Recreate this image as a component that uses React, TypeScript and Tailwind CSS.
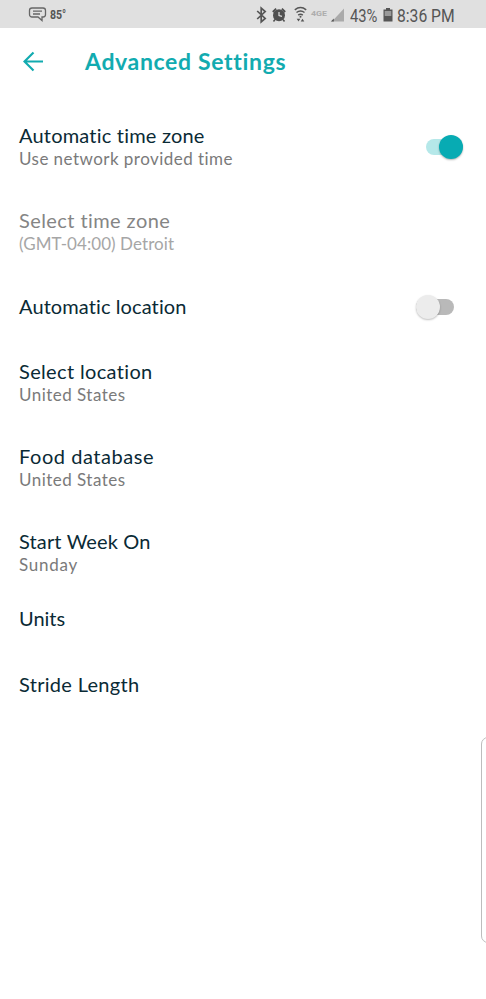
import React from "react";

type SwitchProps = { on: boolean };

function Switch({ on }: SwitchProps) {
  return on ? (
    <div className="flex h-6 w-[37px] items-center justify-end">
      <div className="flex h-4 w-full items-center justify-end rounded-full bg-[#b5e8e9]">
        <div className="size-6 shrink-0 rounded-full bg-[#07abb3] shadow-[0_1px_2px_rgba(0,0,0,0.3)]" />
      </div>
    </div>
  ) : (
    <div className="mr-[9px] flex h-6 w-[38px] items-center">
      <div className="flex h-4 w-full items-center rounded-full bg-[#b9b9b9]">
        <div className="size-6 shrink-0 rounded-full bg-[#ececec] shadow-[0_1px_2px_rgba(0,0,0,0.25)]" />
      </div>
    </div>
  );
}

function StatusBar() {
  return (
    <div className="flex h-7 items-center bg-[#e0e0e0] font-['Roboto',sans-serif] text-[#555]">
      <svg className="ml-7 shrink-0" width="20" height="28" viewBox="0 0 20 28" fill="none" stroke="#666" strokeWidth="1.3">
        <path d="M4 8h11a2.500 2.500 0 0 1 2.500 2.500v4a2.500 2.500 0 0 1-2.500 2.500h-1v3.500L10 17H4a2.500 2.500 0 0 1-2.500-2.500v-4A2.500 2.500 0 0 1 4 8z" />
        <path d="M5 11.200h9M5 14h7" />
      </svg>
      <div className="ml-[2px] w-[18px] shrink-0">
        <span className="block w-max origin-left scale-x-[0.88] pt-px text-[12px] font-bold leading-7">85°</span>
      </div>
      <svg className="ml-[186px] shrink-0" width="92" height="28" viewBox="254 0 92 28" fill="none">
        <path d="M257.200 11l8 7.500-4 3.500V8l4 3.500-8 7.500" stroke="#555" strokeWidth="1.700" />
        <circle cx="279" cy="15.300" r="6" fill="#505050" />
        <path d="M272.800 12l3.300-3.300M285.200 12l-3.300-3.300" stroke="#505050" strokeWidth="1.800" />
        <path d="M275 19.500l-1.500 2M283 19.500l1.500 2" stroke="#505050" strokeWidth="1.500" />
        <path d="M279 12v3.500l3 .8" stroke="#e0e0e0" strokeWidth="1.200" />
        <path
          d="M294.800 9.800q5.700-4.400 11.400 0M296.500 12.500q4-3.200 8 0M298.200 15.200q2.300-1.800 4.600 0"
          stroke="#555"
          strokeWidth="1.500"
        />
        <circle cx="300.500" cy="16.800" r="1" fill="#555" />
        <path d="M296.700 18.800l1.800 2.800 1.800-2.800zM300.700 21.600l1.800-2.800 1.800 2.800z" fill="#555" />
        <text x="311" y="15.500" fontSize="8" fontWeight="700" fill="#adadad" textLength="16" lengthAdjust="spacingAndGlyphs">4GE</text>
        <path d="M344 8.500V21.500H332z" fill="#aaa" />
        <path d="M330.800 21.500l3-3v3z" fill="#555" />
      </svg>
      <div className="ml-[4px] w-[28px] shrink-0">
        <span className="block w-max origin-left scale-x-[0.82] pt-1 text-[18px] leading-7">43%</span>
      </div>
      <svg className="ml-[4px] shrink-0" width="12" height="28" viewBox="382 0 12 28">
        <path d="M386 8h4v1.500h2.500V21.500h-9V9.500h2.500z" fill="#555" />
        <path d="M384.700 11h6.600v5h-6.600z" fill="#999" />
      </svg>
      <span className="ml-[3px] block w-max shrink-0 origin-left scale-x-[0.87] pt-1 text-[18px] leading-7">8:36 PM</span>
    </div>
  );
}

type ItemProps = {
  title: string;
  subtitle?: string;
  className?: string;
  titleClass?: string;
  subtitleClass?: string;
  children?: React.ReactNode;
};

function Item({
  title,
  subtitle,
  className = "",
  titleClass = "text-[#0a2a35]",
  subtitleClass = "text-[#7a7a7a]",
  children,
}: ItemProps) {
  return (
    <div className={`flex items-center justify-between pl-[19px] pr-[23px] ${className}`}>
      <div className="whitespace-nowrap">
        <h2 className={`w-max pb-0.5 text-[20px] leading-[22px] ${titleClass}`}>{title}</h2>
        {subtitle && (
          <p className={`w-max text-[17px] leading-[22px] ${subtitleClass}`}>{subtitle}</p>
        )}
      </div>
      {children}
    </div>
  );
}

export default function App() {
  return (
    <div className="relative h-[999px] w-[486px] overflow-hidden bg-white font-['Lato',sans-serif] [font-variant-ligatures:none]">
      <StatusBar />
      <header className="flex h-[67px] items-center pl-[23px]">
        <svg width="21" height="21" viewBox="0 0 21 21" fill="none" stroke="#12abb0" strokeWidth="2.2">
          <path d="M20 10.500H2M10.500 1.500l-9 9 9 9" />
        </svg>
        <h1 className="ml-[41px] whitespace-nowrap pb-0.5 text-[23px] font-bold leading-8 tracking-[0.66px] text-[#12abb0]">
          Advanced Settings
        </h1>
      </header>
      <main>
        <Item
          className="mt-[29px]"
          title="Automatic time zone"
          subtitle="Use network provided time"
          titleClass="text-[#0a2a35] tracking-[0.2px]"
          subtitleClass="text-[#7a7a7a] tracking-[0.46px]"
        >
          <Switch on />
        </Item>
        <Item
          className="mt-[39px]"
          title="Select time zone"
          subtitle="(GMT-04:00) Detroit"
          titleClass="text-[#858585] tracking-[0.42px]"
          subtitleClass="text-[#a6a6a6] tracking-[0.07px]"
        />
        <Item className="mt-10" title="Automatic location" titleClass="text-[#0a2a35] tracking-[0.1px]">
          <Switch on={false} />
        </Item>
        <Item
          className="mt-[41px]"
          title="Select location"
          subtitle="United States"
          titleClass="text-[#0a2a35] tracking-[0.35px]"
          subtitleClass="text-[#7a7a7a] tracking-[0.47px]"
        />
        <Item
          className="mt-[39px]"
          title="Food database"
          subtitle="United States"
          titleClass="text-[#0a2a35] tracking-[0.55px]"
          subtitleClass="text-[#7a7a7a] tracking-[0.47px]"
        />
        <Item
          className="mt-[39px]"
          title="Start Week On"
          subtitle="Sunday"
          titleClass="text-[#0a2a35] tracking-[0.14px]"
          subtitleClass="text-[#7a7a7a] tracking-[0.75px]"
        />
        <Item className="mt-[31px]" title="Units" />
        <Item className="mt-[42px]" title="Stride Length" titleClass="text-[#0a2a35] tracking-[0.3px]" />
      </main>
      {/* edge panel handle */}
      <div className="absolute -right-3 top-[737px] h-[206px] w-[17px] rounded-[7px] border border-[#bdbdbd]" />
    </div>
  );
}
